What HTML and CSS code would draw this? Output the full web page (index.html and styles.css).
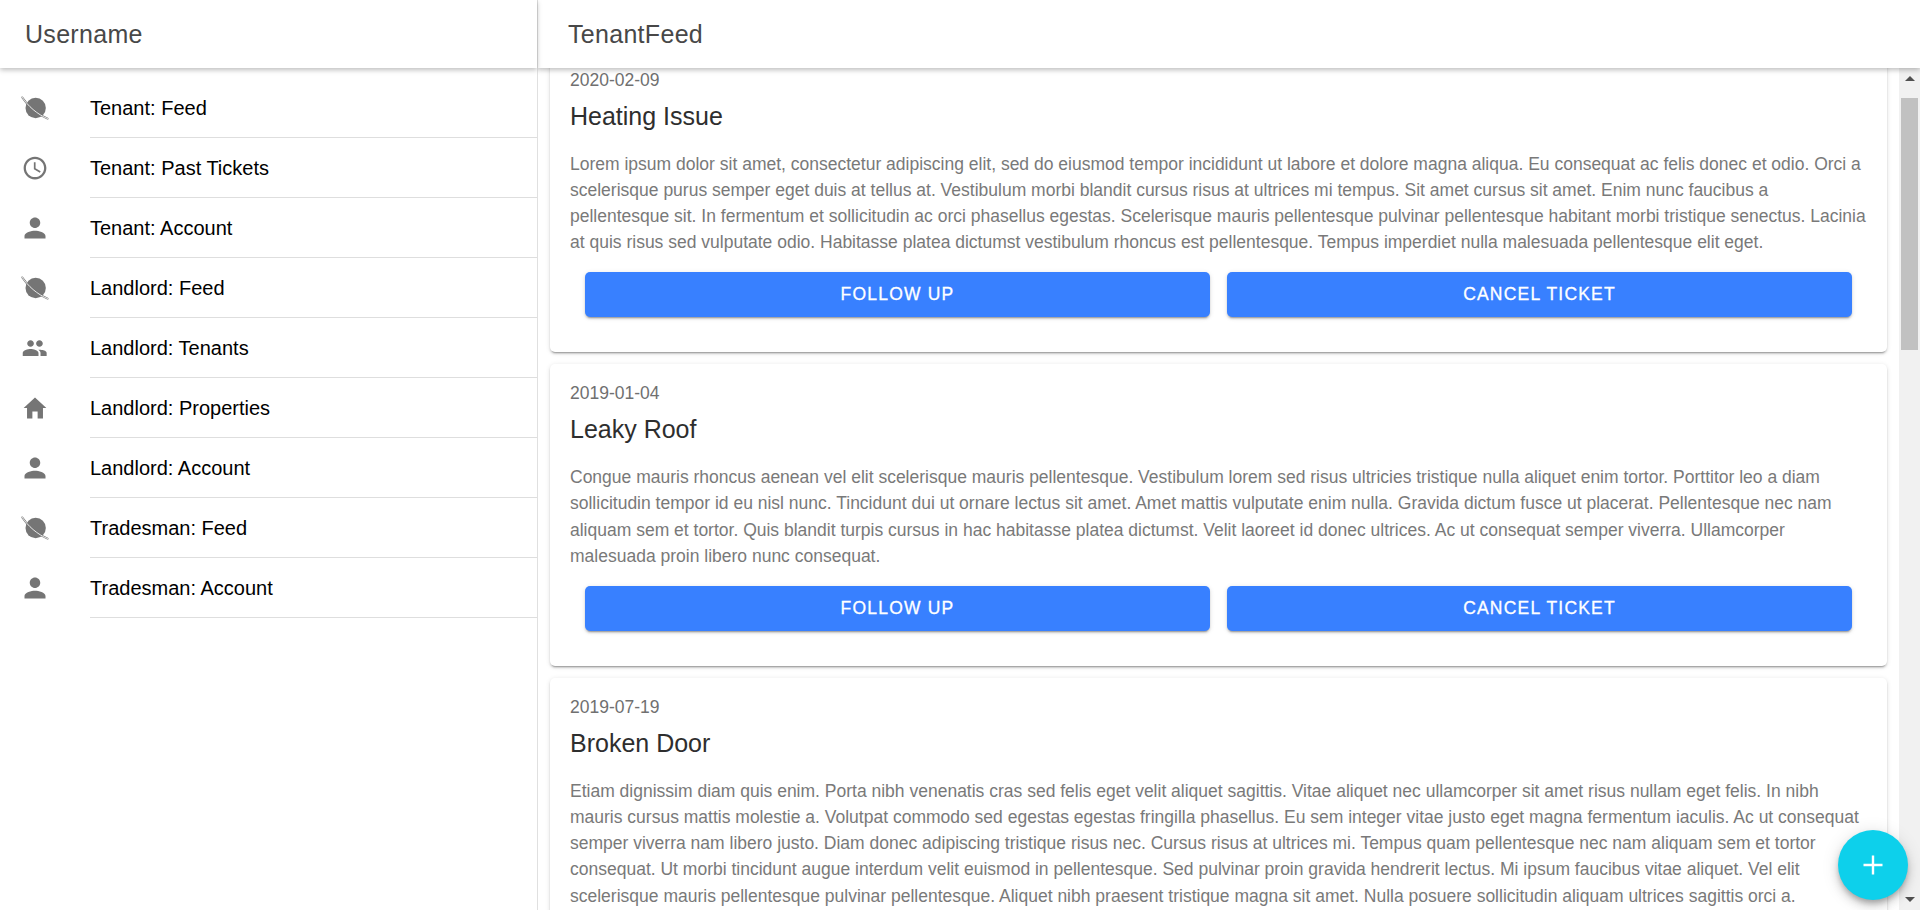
FILE: index.html
```html
<!DOCTYPE html>
<html lang="en">
<head>
    <meta charset="UTF-8" />
    <title>TenantFeed</title>
    <link rel="stylesheet" href="styles.css">
</head>
<body>
<svg class="defs">
    <symbol id="i-planet" viewBox="0 0 512 512">
        <circle cx="268" cy="256" r="186" />
        <path class="ring" d="M24 62 C120 214 300 376 486 450" />
        <path class="ring-gap" d="M24 62 C120 214 300 376 486 450" />
    </symbol>
    <symbol id="i-time" viewBox="0 0 512 512">
        <path d="M256 48C141.1 48 48 141.1 48 256s93.1 208 208 208c115 0 208-93.1 208-208S371 48 256 48zm0 374.4c-91.9 0-166.4-74.5-166.4-166.4S164.1 89.6 256 89.6 422.4 164.1 422.4 256 347.9 422.4 256 422.4z" />
        <path d="M266.4 152h-31.2v124.8l109.2 65.5 15.6-25.6-93.6-55.5V152z" />
    </symbol>
    <symbol id="i-person" viewBox="0 0 512 512">
        <path d="M256 256c52.805 0 96-43.201 96-96s-43.195-96-96-96-96 43.201-96 96 43.195 96 96 96zm0 48c-63.598 0-192 32.402-192 96v48h384v-48c0-63.598-128.402-96-192-96z" />
    </symbol>
    <symbol id="i-people" viewBox="0 0 512 512">
        <path d="M337.454 232c33.599 0 61.092-27.002 61.092-60 0-32.997-27.493-60-61.092-60s-61.09 27.003-61.09 60c0 32.998 27.491 60 61.09 60zm-162.908 0c33.599 0 61.09-27.002 61.09-60 0-32.997-27.491-60-61.09-60s-61.092 27.003-61.092 60c0 32.998 27.493 60 61.092 60zm0 44C126.688 276 32 298.998 32 346v54h288v-54c0-47.002-97.599-70-145.454-70zm162.908 11.003c-6.105 0-13.032.497-20.36 1.499 23.133 16.881 39.906 33.4 39.906 58.498V400h112v-54c0-47.002-83.7-58.997-131.546-58.997z" />
    </symbol>
    <symbol id="i-home" viewBox="0 0 512 512">
        <path d="M208 448V320h96v128h97.6V256H464L256 64 48 256h62.4v192z" />
    </symbol>
</svg>

<div class="app">
    <aside class="side">
        <header class="bar">Username</header>
        <ul class="menu">
            <li><svg class="icon"><use href="#i-planet" /></svg><span class="label">Tenant: Feed</span></li>
            <li><svg class="icon"><use href="#i-time" /></svg><span class="label">Tenant: Past Tickets</span></li>
            <li><svg class="icon"><use href="#i-person" /></svg><span class="label">Tenant: Account</span></li>
            <li><svg class="icon"><use href="#i-planet" /></svg><span class="label">Landlord: Feed</span></li>
            <li><svg class="icon"><use href="#i-people" /></svg><span class="label">Landlord: Tenants</span></li>
            <li><svg class="icon"><use href="#i-home" /></svg><span class="label">Landlord: Properties</span></li>
            <li><svg class="icon"><use href="#i-person" /></svg><span class="label">Landlord: Account</span></li>
            <li><svg class="icon"><use href="#i-planet" /></svg><span class="label">Tradesman: Feed</span></li>
            <li><svg class="icon"><use href="#i-person" /></svg><span class="label">Tradesman: Account</span></li>
        </ul>
    </aside>

    <main class="main">
        <header class="bar bar-main">TenantFeed</header>
        <div class="body">
            <div class="feed">
                <section class="card">
                    <div class="date">2020-02-09</div>
                    <h2>Heating Issue</h2>
                    <p>Lorem ipsum dolor sit amet, consectetur adipiscing elit, sed do eiusmod tempor incididunt ut labore et dolore magna aliqua. Eu consequat ac felis donec et odio. Orci a scelerisque purus semper eget duis at tellus at. Vestibulum morbi blandit cursus risus at ultrices mi tempus. Sit amet cursus sit amet. Enim nunc faucibus a pellentesque sit. In fermentum et sollicitudin ac orci phasellus egestas. Scelerisque mauris pellentesque pulvinar pellentesque habitant morbi tristique senectus. Lacinia at quis risus sed vulputate odio. Habitasse platea dictumst vestibulum rhoncus est pellentesque. Tempus imperdiet nulla malesuada pellentesque elit eget.</p>
                    <div class="actions">
                        <button>Follow Up</button>
                        <button>Cancel Ticket</button>
                    </div>
                </section>
                <section class="card">
                    <div class="date">2019-01-04</div>
                    <h2>Leaky Roof</h2>
                    <p>Congue mauris rhoncus aenean vel elit scelerisque mauris pellentesque. Vestibulum lorem sed risus ultricies tristique nulla aliquet enim tortor. Porttitor leo a diam sollicitudin tempor id eu nisl nunc. Tincidunt dui ut ornare lectus sit amet. Amet mattis vulputate enim nulla. Gravida dictum fusce ut placerat. Pellentesque nec nam aliquam sem et tortor. Quis blandit turpis cursus in hac habitasse platea dictumst. Velit laoreet id donec ultrices. Ac ut consequat semper viverra. Ullamcorper malesuada proin libero nunc consequat.</p>
                    <div class="actions">
                        <button>Follow Up</button>
                        <button>Cancel Ticket</button>
                    </div>
                </section>
                <section class="card">
                    <div class="date">2019-07-19</div>
                    <h2>Broken Door</h2>
                    <p>Etiam dignissim diam quis enim. Porta nibh venenatis cras sed felis eget velit aliquet sagittis. Vitae aliquet nec ullamcorper sit amet risus nullam eget felis. In nibh mauris cursus mattis molestie a. Volutpat commodo sed egestas egestas fringilla phasellus. Eu sem integer vitae justo eget magna fermentum iaculis. Ac ut consequat semper viverra nam libero justo. Diam donec adipiscing tristique risus nec. Cursus risus at ultrices mi. Tempus quam pellentesque nec nam aliquam sem et tortor consequat. Ut morbi tincidunt augue interdum velit euismod in pellentesque. Sed pulvinar proin gravida hendrerit lectus. Mi ipsum faucibus vitae aliquet. Vel elit scelerisque mauris pellentesque pulvinar pellentesque. Aliquet nibh praesent tristique magna sit amet. Nulla posuere sollicitudin aliquam ultrices sagittis orci a.</p>
                </section>
            </div>
            <div class="scrollbar">
                <span class="arrow arrow-up"></span>
                <span class="thumb"></span>
                <span class="arrow arrow-down"></span>
            </div>
        </div>
        <button class="fab" aria-label="Add"><svg viewBox="0 0 24 24"><path d="M12 2.500v19M2.500 12h19" /></svg></button>
    </main>
</div>
</body>
</html>
```

FILE: styles.css
```css
* {
  box-sizing: border-box;
}
body {
  margin: 0;
  height: 100vh;
  overflow: hidden;
  background: #fff;
  font-family: 'Liberation Sans', Arial, sans-serif;
}
.defs {
  display: none;
}
.app {
  display: flex;
  height: 100vh;
}
.side {
  position: relative;
  z-index: 3;
  width: 538px;
  flex: none;
  background: #fff;
  border-right: 1px solid #e0e0e0;
}
.bar {
  position: relative;
  z-index: 2;
  height: 68px;
  display: flex;
  align-items: center;
  padding-left: 25px;
  font-size: 25px;
  letter-spacing: 0.3px;
  color: #484848;
  background: #fff;
  box-shadow: 0 2px 5px rgba(0,0,0,0.26);
}
.bar-main {
  padding-left: 30px;
}
.menu {
  list-style: none;
  margin: 0;
  padding: 10px 0 0;
}
.menu li {
  display: flex;
  align-items: center;
  height: 60px;
  padding-left: 21px;
}
.icon {
  width: 28px;
  height: 28px;
  flex: none;
  margin-right: 41px;
  fill: #757575;
}
.ring {
  fill: none;
  stroke: #757575;
  stroke-width: 34;
  stroke-linecap: round;
}
.ring-gap {
  fill: none;
  stroke: #fff;
  stroke-width: 15;
  stroke-linecap: round;
}
.label {
  flex: 1;
  height: 60px;
  line-height: 60px;
  font-size: 20px;
  color: #000;
  border-bottom: 1px solid #dedede;
}
.main {
  position: relative;
  flex: 1;
  min-width: 0;
  display: flex;
  flex-direction: column;
}
.body {
  flex: 1;
  min-height: 0;
  display: flex;
}
.feed {
  flex: 1;
  min-width: 0;
  overflow: hidden;
  padding: 0 12px;
}
.card {
  margin-top: 12px;
  padding: 20px 20px 35px;
  background: #fff;
  border-radius: 5px;
  box-shadow: 0 3px 1px -2px rgba(0,0,0,0.2), 0 2px 2px rgba(0,0,0,0.14), 0 1px 5px rgba(0,0,0,0.12);
}
.card:first-child {
  margin-top: -17.5px;
}
.date {
  font-size: 17.5px;
  line-height: 18px;
  color: #707070;
}
.card h2 {
  margin: 12px 0 0;
  font-size: 25px;
  font-weight: 400;
  line-height: 30px;
  color: #2e2e2e;
}
.card p {
  margin: 20px 0 0;
  font-size: 17.5px;
  line-height: 26.25px;
  color: #797979;
}
.actions {
  display: flex;
  gap: 17px;
  margin-top: 16.5px;
  padding: 0 15px;
}
.actions button {
  flex: 1;
  height: 45px;
  padding: 0;
  border: none;
  border-radius: 5px;
  background: #3880ff;
  color: #fff;
  font-family: inherit;
  font-size: 17.5px;
  letter-spacing: 1.2px;
  text-transform: uppercase;
  -webkit-text-stroke: 0.3px #fff;
  box-shadow: 0 3px 1px -2px rgba(0,0,0,0.2), 0 2px 2px rgba(0,0,0,0.14), 0 1px 5px rgba(0,0,0,0.12);
}
.scrollbar {
  width: 21px;
  flex: none;
  display: flex;
  flex-direction: column;
  align-items: center;
  background: #f1f1f1;
}
.arrow {
  width: 0;
  height: 0;
  border-left: 5px solid transparent;
  border-right: 5px solid transparent;
}
.arrow-up {
  margin-top: 8px;
  border-bottom: 5px solid #505050;
}
.thumb {
  width: 17px;
  height: 252px;
  margin-top: 17px;
  background: #c1c1c1;
}
.arrow-down {
  margin-top: auto;
  margin-bottom: 8px;
  border-top: 5px solid #505050;
}
.fab {
  position: absolute;
  right: 12px;
  bottom: 10px;
  width: 70px;
  height: 70px;
  padding: 0;
  display: flex;
  align-items: center;
  justify-content: center;
  border: none;
  border-radius: 50%;
  background: #0dd0eb;
  box-shadow: 0 4px 5px -1px rgba(0,0,0,0.2), 0 6px 10px rgba(0,0,0,0.14), 0 2px 18px rgba(0,0,0,0.12);
}
.fab svg {
  width: 24px;
  height: 24px;
  fill: none;
  stroke: #fff;
  stroke-width: 2.4;
}
```
